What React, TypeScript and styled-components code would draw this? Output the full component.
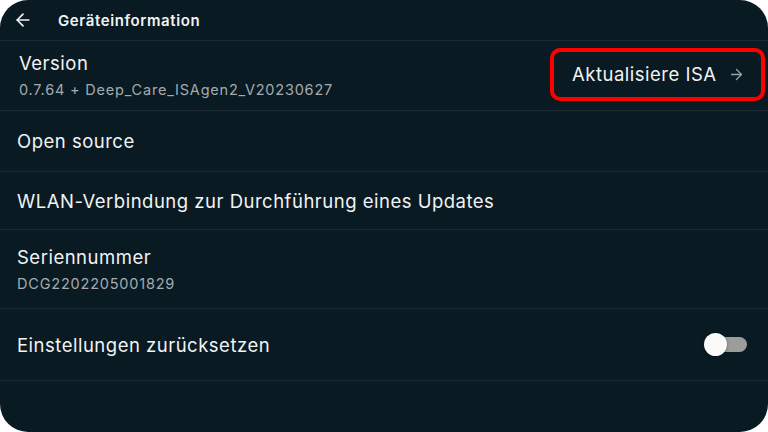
import styled, { createGlobalStyle } from 'styled-components';
import { ArrowLeft, ArrowRight } from 'lucide-react';

const GlobalStyle = createGlobalStyle`
  html, body {
    margin: 0;
    padding: 0;
    background: #ffffff;
  }
  * {
    box-sizing: border-box;
  }
`;

const Screen = styled.div`
  width: 768px;
  height: 432px;
  background: #0a1a22;
  border-radius: 28px;
  overflow: hidden;
  font-family: 'Inter', 'Noto Sans', sans-serif;
  color: #f1f3f4;
  display: flex;
  flex-direction: column;
`;

const Header = styled.div`
  height: 41px;
  display: flex;
  align-items: center;
  padding-left: 13px;
  gap: 25px;
  border-bottom: 1px solid #1c2b33;
`;

const BackButton = styled.button`
  background: none;
  border: none;
  padding: 0;
  color: #f1f3f4;
  display: flex;
  align-items: center;
  cursor: pointer;
`;

const Title = styled.h1`
  margin: 0;
  font-size: 15px;
  font-weight: 600;
  letter-spacing: 0.6px;
`;

const Row = styled.div<{ $h: number; $pl?: number }>`
  height: ${(p) => p.$h}px;
  display: flex;
  align-items: center;
  justify-content: space-between;
  padding-left: ${(p) => p.$pl ?? 17}px;
  padding-right: 3px;
  border-bottom: 1px solid #1c2b33;
`;

const Texts = styled.div`
  display: flex;
  flex-direction: column;
  gap: 7px;
`;

const Label = styled.div`
  font-size: 18.5px;
  font-weight: 400;
  line-height: 22px;
  letter-spacing: 0.5px;
`;

const Sub = styled.div`
  font-size: 14.5px;
  line-height: 18px;
  color: #a3abb0;
  letter-spacing: 0.8px;
`;

const UpdateButton = styled.button`
  width: 215px;
  height: 53px;
  margin-top: -3px;
  border: 4px solid #ff0000;
  border-radius: 10px;
  background: transparent;
  color: #f1f3f4;
  font-family: inherit;
  font-size: 18.5px;
  letter-spacing: 0.5px;
  display: flex;
  align-items: center;
  padding: 0 0 0 18px;
  gap: 11px;
  cursor: pointer;
`;

const Toggle = styled.div`
  position: relative;
  width: 42px;
  height: 15px;
  margin-right: 18px;
  border-radius: 8px;
  background: #9c9c9c;
`;

const Knob = styled.div`
  position: absolute;
  left: -1px;
  top: 50%;
  width: 23px;
  height: 23px;
  margin-top: -11.5px;
  border-radius: 50%;
  background: #fafafa;
  box-shadow: 0 1px 3px rgba(0, 0, 0, 0.4);
`;

export default function App() {
  return (
    <>
      <GlobalStyle />
      <Screen>
        <Header>
          <BackButton>
            <ArrowLeft size={20} strokeWidth={2} />
          </BackButton>
          <Title>Geräteinformation</Title>
        </Header>
        <Row $h={70} $pl={19}>
          <Texts>
            <Label>Version</Label>
            <Sub>0.7.64 + Deep_Care_ISAgen2_V20230627</Sub>
          </Texts>
          <UpdateButton>
            Aktualisiere ISA
            <ArrowRight size={17} color="#9aa2a7" strokeWidth={1.8} />
          </UpdateButton>
        </Row>
        <Row $h={61}>
          <Label>Open source</Label>
        </Row>
        <Row $h={58}>
          <Label>WLAN-Verbindung zur Durchführung eines Updates</Label>
        </Row>
        <Row $h={79}>
          <Texts>
            <Label>Seriennummer</Label>
            <Sub>DCG2202205001829</Sub>
          </Texts>
        </Row>
        <Row $h={72}>
          <Label>Einstellungen zurücksetzen</Label>
          <Toggle>
            <Knob />
          </Toggle>
        </Row>
      </Screen>
    </>
  );
}
